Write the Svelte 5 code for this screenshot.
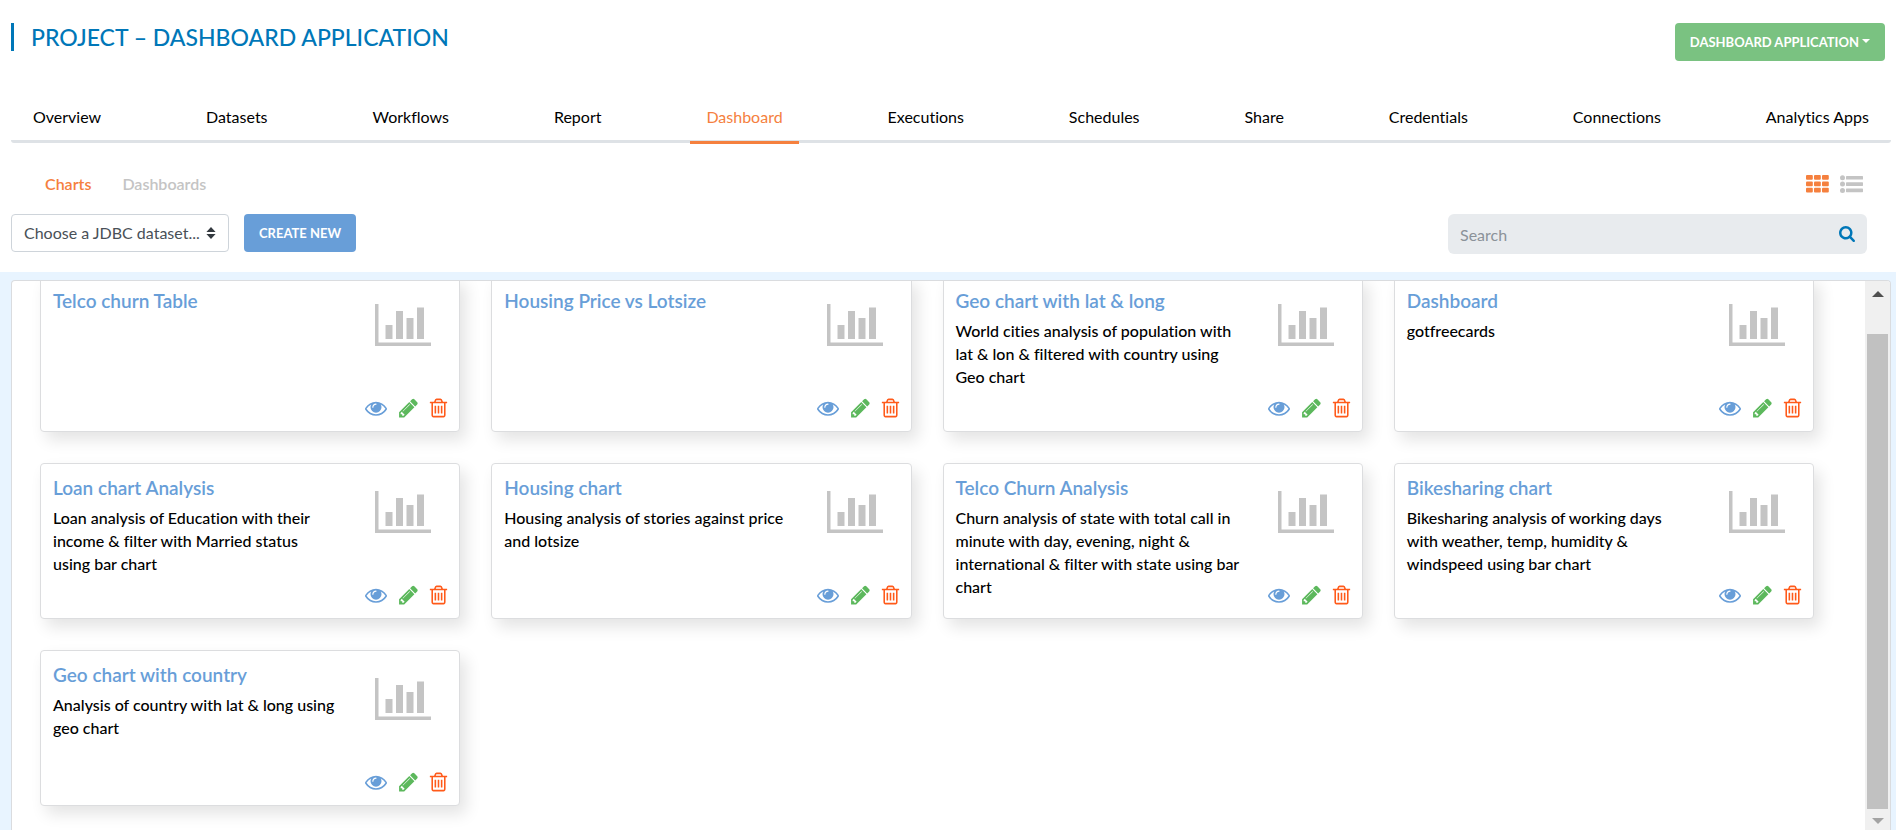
<script>
  import { onMount } from 'svelte';

  const sections = [
    'Overview', 'Datasets', 'Workflows', 'Report', 'Dashboard', 'Executions',
    'Schedules', 'Share', 'Credentials', 'Connections', 'Analytics Apps'
  ];
  const cards = [
    { title: 'Telco churn Table', text: '' },
    { title: 'Housing Price vs Lotsize', text: '' },
    { title: 'Geo chart with lat & long', text: 'World cities analysis of population with lat & lon & filtered with country using Geo chart' },
    { title: 'Dashboard', text: 'gotfreecards' },
    { title: 'Loan chart Analysis', text: 'Loan analysis of Education with their income & filter with Married status using bar chart' },
    { title: 'Housing chart', text: 'Housing analysis of stories against price and lotsize' },
    { title: 'Telco Churn Analysis', text: 'Churn analysis of state with total call in minute with day, evening, night & international & filter with state using bar chart' },
    { title: 'Bikesharing chart', text: 'Bikesharing analysis of working days with weather, temp, humidity & windspeed using bar chart' },
    { title: 'Geo chart with country', text: 'Analysis of country with lat & long using geo chart' }
  ];

  let active = $state('Dashboard');
  let query = $state('');
  let scroller;
  let thumbTop = $state(0);
  let thumbSize = $state(100);

  function syncThumb() {
    thumbTop = (scroller.scrollTop / scroller.scrollHeight) * 100;
    thumbSize = (scroller.clientHeight / scroller.scrollHeight) * 100;
  }

  function step(amount) {
    scroller.scrollTop += amount;
  }

  onMount(() => {
    scroller.scrollTop = scroller.scrollHeight;
    syncThumb();
  });
</script>

<svelte:window onresize={syncThumb} />

<div class="page">
  <header>
    <h1>PROJECT – DASHBOARD APPLICATION</h1>
    <button class="btn green">DASHBOARD APPLICATION<span class="caret"></span></button>
  </header>

  <nav class="sections" aria-label="Project sections">
    {#each sections as name}
      <a href="#{name}" class:active={active === name} onclick={() => (active = name)}>{name}</a>
    {/each}
  </nav>

  <div class="subbar">
    <div class="tabs">
      <a href="#charts" class="active">Charts</a>
      <a href="#dashboards">Dashboards</a>
    </div>
    <div class="views">
      <button class="icon on" aria-label="Grid view">
        <svg width="23" height="18" viewBox="0 0 23 18" fill="currentColor">
          {#each [0, 8, 16] as x}
            {#each [0, 6.4, 12.8] as y}
              <rect {x} {y} width="6.8" height="4.8" rx="1" />
            {/each}
          {/each}
        </svg>
      </button>
      <button class="icon" aria-label="List view">
        <svg width="23" height="18" viewBox="0 0 23 18" fill="currentColor">
          {#each [2.8, 9.1, 15.4] as y}
            <circle cx="2.5" cy={y} r="2.5" />
            <rect x="6" y={y - 1.8} width="17" height="3.6" rx="0.6" />
          {/each}
        </svg>
      </button>
    </div>
  </div>

  <div class="tools">
    <div class="picker">
      <select aria-label="JDBC dataset">
        <option>Choose a JDBC dataset...</option>
      </select>
      <svg width="10" height="12" viewBox="0 0 10 12" fill="#343a40"><path d="M5 0L9.6 5H.4zM5 12L.4 7h9.200z" /></svg>
    </div>
    <button class="btn blue">CREATE NEW</button>
    <div class="search">
      <input type="text" placeholder="Search" aria-label="Search" bind:value={query} />
      <button class="icon" aria-label="Run search">
        <svg width="16" height="16" viewBox="64 128 1664 1664" fill="currentColor"><path d="M1216 832q0-185-131.500-316.500t-316.500-131.500-316.500 131.500-131.500 316.500 131.500 316.500 316.500 131.500 316.500-131.500 131.500-316.500zm512 832q0 52-38 90t-90 38q-54 0-90-38l-343-342q-179 124-399 124-143 0-273.500-55.500t-225-150-150-225-55.500-273.500 55.500-273.500 150-225 225-150 273.500-55.500 273.500 55.500 225 150 150 225 55.500 273.500q0 220-124 399l343 343q37 37 37 90z" /></svg>
      </button>
    </div>
  </div>

  <main>
    <div class="panel">
      <div class="scroller" bind:this={scroller} onscroll={syncThumb}>
        <div class="grid">
          {#each cards as card}
            <article>
              <div class="copy">
                <h2>{card.title}</h2>
                <p>{card.text}</p>
              </div>
              <div class="side">
                <svg class="chart" width="56" height="42" viewBox="0 0 2048 1536" fill="#c4c4c4"><path d="M640 768v512h-256v-512h256zM1024 256v1024h-256v-1024h256zM2048 1408v128h-2048v-1536h128v1408h1920zM1408 512v768h-256v-768h256zM1792 128v1152h-256v-1152h256z" /></svg>
                <div class="actions">
                  <button class="icon view" aria-label="View {card.title}">
                    <svg width="22" height="22" viewBox="0 0 1792 1792" fill="currentColor"><path d="M1664 960q-152-236-381-353 61 104 61 225 0 185-131.500 316.500t-316.500 131.500-316.500-131.500-131.500-316.500q0-121 61-225-229 117-381 353 133 205 333.500 326.500t434.500 121.500 434.500-121.500 333.500-326.500zm-720-384q0-20-14-34t-34-14q-125 0-214.500 89.500t-89.500 214.500q0 20 14 34t34 14 34-14 14-34q0-86 61-147t147-61q20 0 34-14t14-34zm848 384q0 34-20 69-140 230-376.500 368.500t-499.500 138.500-499.500-139-376.500-368q-20-35-20-69t20-69q140-229 376.500-368t499.500-139 499.500 139 376.500 368q20 35 20 69z" /></svg>
                  </button>
                  <button class="icon edit" aria-label="Edit {card.title}">
                    <svg width="19" height="22" viewBox="122 0 1548 1792" fill="currentColor"><path d="M491 1536l91-91-235-235-91 91v107h128v128h107zm523-928q0-22-22-22-10 0-17 7l-542 542q-7 7-7 17 0 22 22 22 10 0 17-7l542-542q7-7 7-17zm-54-192l416 416-832 832h-416v-416zm683 96q0 53-37 90l-166 166-416-416 166-165q36-38 90-38 53 0 91 38l235 234q37 39 37 91z" /></svg>
                  </button>
                  <button class="icon remove" aria-label="Delete {card.title}">
                    <svg width="17" height="22" viewBox="204 0 1385 1792" overflow="visible" fill="currentColor"><path d="M704 736v576q0 14-9 23t-23 9h-64q-14 0-23-9t-9-23v-576q0-14 9-23t23-9h64q14 0 23 9t9 23zm256 0v576q0 14-9 23t-23 9h-64q-14 0-23-9t-9-23v-576q0-14 9-23t23-9h64q14 0 23 9t9 23zm256 0v576q0 14-9 23t-23 9h-64q-14 0-23-9t-9-23v-576q0-14 9-23t23-9h64q14 0 23 9t9 23zm128 724v-948h-896v948q0 22 7 40.500t14.500 27 10.500 8.500h832q3 0 10.500-8.500t14.500-27 7-40.500zm-672-1076h448l-48-117q-7-9-17-11h-317q-10 2-17 11zm928 32v64q0 14-9 23t-23 9h-96v948q0 83-47 143.500t-113 60.500h-832q-66 0-113-58.500t-47-141.500v-952h-96q-14 0-23-9t-9-23v-64q0-14 9-23t23-9h309l70-167q15-37 54-63t79-26h320q40 0 79 26t54 63l70 167h309q14 0 23 9t9 23z" /></svg>
                  </button>
                </div>
              </div>
            </article>
          {/each}
        </div>
      </div>
      <div class="scrollbar">
        <button class="arrow up" aria-label="Scroll up" onclick={() => step(-40)}>
          <svg width="12" height="6" viewBox="0 0 12 6" fill="#505050"><path d="M6 0l6 6H0z" /></svg>
        </button>
        <div class="track">
          <div class="thumb" style="top: {thumbTop}%; height: {thumbSize}%"></div>
        </div>
        <button class="arrow down" aria-label="Scroll down" onclick={() => step(40)}>
          <svg width="12" height="6" viewBox="0 0 12 6" fill="#a3a3a3"><path d="M0 0h12L6 6z" /></svg>
        </button>
      </div>
    </div>
  </main>
</div>

<style>
  :global(body) {
    margin: 0;
    background: #fff;
  }
  .page {
    display: flex;
    flex-direction: column;
    height: 100vh;
    box-sizing: border-box;
    font-family: Lato, 'Open Sans', sans-serif;
    font-size: 16px;
    line-height: 24px;
    font-variant-ligatures: none;
    color: #000;
  }
  a {
    text-decoration: none;
    color: inherit;
  }
  button,
  input,
  select {
    font: inherit;
    margin: 0;
    border: 0;
    box-sizing: border-box;
  }
  button {
    cursor: pointer;
  }
  header {
    display: flex;
    justify-content: space-between;
    align-items: flex-start;
    padding: 23px 11px 0;
  }
  h1 {
    margin: 0;
    padding-left: 17px;
    border-left: 3px solid #0077b8;
    font-size: 23px;
    line-height: 28px;
    font-weight: 500;
    color: #0077b8;
  }
  .btn {
    height: 38px;
    padding: 0 15px;
    border-radius: 4px;
    color: #fff;
    font-size: 13px;
    font-weight: 700;
    line-height: 24px;
  }
  .green {
    background: #7ac281;
  }
  .blue {
    background: #689ed8;
  }
  .caret {
    display: inline-block;
    margin-left: 3px;
    vertical-align: 4px;
    border: 4px solid transparent;
    border-top-color: #fff;
    border-bottom: 0;
  }
  .sections {
    display: flex;
    justify-content: space-between;
    margin: 35px 5px 0 11px;
    padding: 0 6px;
    border-bottom: 3px solid #dee2e6;
    border-radius: 3px;
  }
  .sections a {
    padding: 9px 16px 12px;
    margin-bottom: -4px;
    border-bottom: 3px solid transparent;
  }
  .sections a.active {
    color: #f5803e;
    border-bottom-color: #f5803e;
  }
  .subbar {
    display: flex;
    justify-content: space-between;
    align-items: center;
    padding: 29px 33px 18px 45px;
  }
  .tabs {
    display: flex;
    gap: 31px;
    font-weight: 600;
    color: #c4c4c4;
  }
  .tabs .active {
    color: #f5803e;
  }
  .views {
    display: flex;
    gap: 11px;
  }
  .icon {
    display: flex;
    padding: 0;
    background: none;
    color: #c4c4c4;
  }
  .icon.on {
    color: #f5803e;
  }
  .tools {
    display: flex;
    align-items: flex-start;
    gap: 15px;
    padding: 0 29px 18px 11px;
  }
  .picker {
    display: grid;
    align-items: center;
    width: 218px;
  }
  .picker > * {
    grid-area: 1 / 1;
  }
  .picker svg {
    justify-self: end;
    margin-right: 13px;
    pointer-events: none;
  }
  select {
    appearance: none;
    width: 100%;
    height: 38px;
    padding: 0 28px 0 12px;
    border: 1px solid #ced4da;
    border-radius: 4px;
    background: #fff;
    color: #495057;
  }
  .search {
    display: flex;
    align-items: center;
    width: 419px;
    height: 40px;
    margin-left: auto;
    padding-right: 12px;
    box-sizing: border-box;
    border-radius: 6px;
    background: #e8ebee;
  }
  .search input {
    flex: 1;
    min-width: 0;
    height: 40px;
    padding: 0 12px;
    background: none;
    outline: 0;
  }
  .search input::placeholder {
    color: #8b9299;
  }
  .search .icon {
    color: #0077b8;
  }
  main {
    display: flex;
    flex: 1;
    min-height: 0;
    padding: 8px 5px 0 11px;
    background: #e8f4ff;
  }
  .panel {
    display: flex;
    flex: 1;
    min-width: 0;
    border: 1px solid #dadcdf;
    border-bottom: 0;
    border-radius: 4px 4px 0 0;
    background: #fff;
    overflow: hidden;
  }
  .scroller {
    flex: 1;
    min-width: 0;
    overflow-y: auto;
    scrollbar-width: none;
  }
  .grid {
    display: grid;
    grid-template-columns: repeat(4, minmax(0, 1fr));
    gap: 31px;
    padding: 27px 51px 24px 28px;
  }
  article {
    display: flex;
    justify-content: space-between;
    min-height: 156px;
    padding: 12px;
    box-sizing: border-box;
    border: 1px solid #dcdddf;
    border-radius: 4px;
    background: #fff;
    box-shadow: 6px 8px 16px rgba(0, 0, 0, 0.11);
  }
  .copy {
    flex: 0 1 285px;
    min-width: 0;
  }
  h2 {
    margin: 0;
    font-size: 19px;
    line-height: 24px;
    font-weight: 600;
    color: #689ed8;
  }
  p {
    margin: 6px 0 0;
    line-height: 23px;
    font-weight: 500;
  }
  .side {
    display: flex;
    flex-direction: column;
    justify-content: space-between;
    align-items: flex-end;
  }
  .chart {
    margin: 15px 16px 0 0;
  }
  .actions {
    display: flex;
    gap: 12px;
  }
  .view {
    color: #689ed8;
  }
  .edit {
    color: #5cb85c;
  }
  .remove {
    color: #ff5a1a;
  }
  .scrollbar {
    display: flex;
    flex-direction: column;
    width: 25px;
    background: #f0f0f0;
  }
  .arrow {
    display: flex;
    justify-content: center;
    align-items: center;
    padding: 0;
    background: none;
  }
  .up {
    height: 25px;
  }
  .down {
    height: 21px;
    padding-top: 3px;
  }
  .track {
    position: relative;
    flex: 1;
    margin: 0 2px;
  }
  .thumb {
    position: absolute;
    left: 0;
    right: 0;
    background: #c1c1c1;
  }
</style>
